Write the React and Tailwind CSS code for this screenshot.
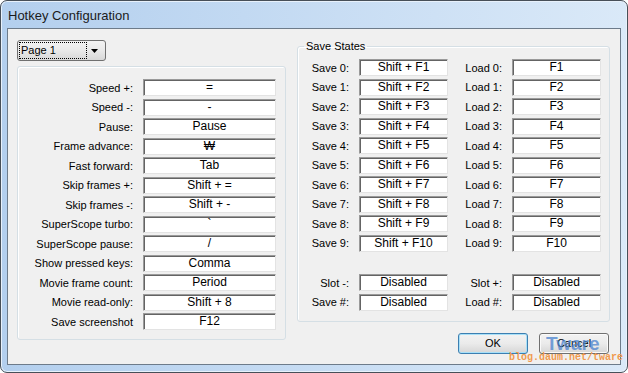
import React from 'react';

const HOTKEYS = [
  ['Speed +:', '='],
  ['Speed -:', '-'],
  ['Pause:', 'Pause'],
  ['Frame advance:', '₩'],
  ['Fast forward:', 'Tab'],
  ['Skip frames +:', 'Shift + ='],
  ['Skip frames -:', 'Shift + -'],
  ['SuperScope turbo:', '`'],
  ['SuperScope pause:', '/'],
  ['Show pressed keys:', 'Comma'],
  ['Movie frame count:', 'Period'],
  ['Movie read-only:', 'Shift + 8'],
  ['Save screenshot', 'F12'],
];

const SLOTS = Array.from({ length: 10 }, (_, i) => i);

function KeyBox({ value, wide }) {
  return (
    <div
      className={`${wide ? 'w-[133px]' : 'w-[89px]'} h-[17px] shrink-0 bg-white border border-t-[#9a9a9a] border-l-[#9a9a9a] border-r-[#e3e3e3] border-b-[#e3e3e3] shadow-[inset_1px_1px_0_#646464] flex items-center justify-center text-[12px] leading-[15px] text-black`}
    >
      {value}
    </div>
  );
}

function SlotRow({ left, leftValue, right, rightValue }) {
  return (
    <div className="h-[19.5px] flex items-center">
      <span className="w-[51px] text-right">{left}</span>
      <span className="w-[10px]" />
      <KeyBox value={leftValue} />
      <span className="w-[54px] text-right">{right}</span>
      <span className="w-[10px]" />
      <KeyBox value={rightValue} />
    </div>
  );
}

function Button({ children, primary }) {
  return (
    <button
      className={`w-[70px] h-[21px] rounded-[3px] border text-[11px] text-black bg-gradient-to-b from-[#f2f2f2] via-[#ebebeb] to-[#d6d6d6] ${
        primary
          ? 'border-[#3c7fb1] shadow-[inset_0_0_0_1px_#a8e0f8]'
          : 'border-[#707070] shadow-[inset_0_0_0_1px_#fafafa]'
      }`}
    >
      {children}
    </button>
  );
}

export default function App() {
  return (
    <div className="relative w-[628px] h-[373px] font-['Liberation_Sans',Arial,sans-serif] text-[11px] text-black overflow-hidden bg-white">
      {/* Window frame */}
      <div className="w-full h-full flex flex-col rounded-[7px] border border-[#474f58] bg-gradient-to-r from-[#b3cfee] to-[#dae9f8] px-[6px] pb-[7px] shadow-[inset_0_0_0_1px_#e8f1fb]">
        <div className="h-[27px] flex items-center pl-[1px] pt-[2px]">
          <span className="text-[13px] text-[#1b1b1b]">Hotkey Configuration</span>
        </div>

        {/* Client area */}
        <div className="flex-1 border border-[#6d7b8a] bg-[#f0f0f0] flex pt-[11px] pl-[9px] pr-[10px]">
          {/* Left column */}
          <div className="w-[269px] flex flex-col">
            <div className="w-[89px] h-[21px] rounded-[3px] border border-[#707070] bg-gradient-to-b from-[#f3f3f3] via-[#e9e9e9] to-[#d8d8d8] flex items-center pl-[1px] pr-[4px]">
              <div className="w-[68px] h-[17px] border border-dotted border-black flex items-center pl-[1px]">
                <span className="text-[11px]">Page 1</span>
              </div>
              <div className="flex-1 flex justify-center">
                <svg width="7" height="4" viewBox="0 0 7 4">
                  <path d="M0 0H7L3.5 4Z" fill="#000" />
                </svg>
              </div>
            </div>

            <div className="mt-[5px] h-[274px] rounded-[3px] border border-[#d5dfe5] shadow-[inset_1px_1px_0_#fff] pt-[11px]">
              {HOTKEYS.map(([label, value]) => (
                <div key={label} className="h-[19.5px] flex items-center">
                  <span className="w-[115px] text-right">{label}</span>
                  <span className="w-[10px]" />
                  <KeyBox value={value} wide />
                </div>
              ))}
            </div>
          </div>

          <div className="w-[11px]" />

          {/* Right column */}
          <div className="w-[313px] flex flex-col">
            <fieldset className="h-[282px] rounded-[3px] border border-[#d5dfe5] shadow-[inset_1px_1px_0_#fff]">
              <legend className="ml-[6px] px-[2px] text-[11px] leading-[13px]">Save States</legend>
              <div className="pt-[5px]">
                {SLOTS.map((i) => (
                  <SlotRow
                    key={i}
                    left={`Save ${i}:`}
                    leftValue={`Shift + F${i + 1}`}
                    right={`Load ${i}:`}
                    rightValue={`F${i + 1}`}
                  />
                ))}
                <div className="mt-[20px]">
                  <SlotRow left="Slot -:" leftValue="Disabled" right="Slot +:" rightValue="Disabled" />
                  <SlotRow left="Save #:" leftValue="Disabled" right="Load #:" rightValue="Disabled" />
                </div>
              </div>
            </fieldset>

            <div className="mt-[11px] flex justify-end gap-[11px] pr-[1px]">
              <Button primary>OK</Button>
              <Button>Cancel</Button>
            </div>
          </div>
        </div>
      </div>

      {/* Watermark */}
      <span className="absolute left-[546px] top-[334px] text-[19px] font-bold text-[#4a83cf] opacity-75 leading-none">
        Tware
      </span>
      <span className="absolute left-[509px] top-[353px] font-['Liberation_Mono',monospace] text-[10px] font-bold text-[#f19a4e] leading-none">
        blog.daum.net/tware
      </span>
    </div>
  );
}
